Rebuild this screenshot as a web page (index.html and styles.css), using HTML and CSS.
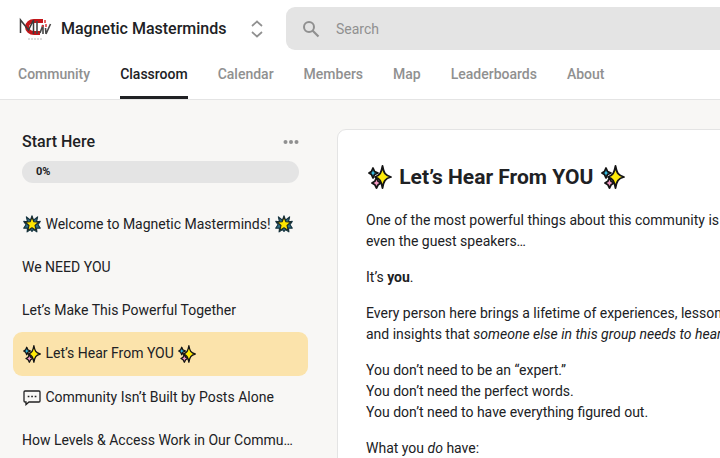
FILE: index.html
```html
<!DOCTYPE html>
<html lang="en">
<head>
<meta charset="utf-8">
<meta name="viewport" content="width=device-width, initial-scale=1">
<title>Magnetic Masterminds</title>
<link rel="stylesheet" href="styles.css">
</head>
<body>
<svg class="sprite" aria-hidden="true">
  <symbol id="sparkles" viewBox="0 0 24 24">
    <g stroke="#151515" stroke-width="1.8" stroke-linejoin="round">
      <path fill="#35bfe6" d="M5 3 6.600 6.600 10 8 6.600 9.400 5 13 3.400 9.400 1 8 3.400 6.600Z"/>
      <path fill="#f29ac3" d="M8.500 12.500 10.200 16.300 13 18 10.200 19.700 8.500 23 6.800 19.700 4 18 6.800 16.300Z"/>
      <path fill="#ffeb0a" d="M14.500 1C15.800 8 17 10.500 23 12 17 13.500 15.800 16 14.500 23 13.200 16 12 13.500 7 12 12 10.500 13.200 8 14.500 1Z"/>
    </g>
  </symbol>
  <symbol id="star" viewBox="0 0 24 24">
    <path fill="#2d6f86" stroke="#173440" stroke-width="1.500" stroke-linejoin="round" d="M12 1 14 7 19.500 2.500 18 9 23 8.500 20 13 23 17.500 18 17.500 18.500 22.500 14 19.500 12 22 10 19.500 5.500 22.500 6 17.500 1 17.500 4 13 1 8.500 6 9 4.500 2.500 10 7Z"/>
    <path fill="#ffe500" stroke="#1b2523" stroke-width="1.400" stroke-linejoin="round" d="M12 3 14.500 9 21 9.500 16 14 17.600 20.500 12 17 6.400 20.500 8 14 3 9.500 9.500 9Z"/>
  </symbol>
</svg>

<header class="header">
  <div class="topbar">
    <div class="brand">
      <svg class="logo" viewBox="0 0 34 26" aria-hidden="true">
        <path d="M25 5H16a7 6 0 0 0 0 12h6" fill="none" stroke="#c4161a" stroke-width="4"/>
        <path d="M2.500 17V4l8 10 5-10v14" fill="none" stroke="#3b3b3b" stroke-width="1.500"/>
        <path d="M19 5v13M22 17l3-8v9M28 18l4.500-10M27.500 12l.5 6" fill="none" stroke="#484848" stroke-width="1.600"/>
        <path d="M27 4v3M24.500 9v2M28 8v3" stroke="#d33" stroke-width="1.500"/>
        <path d="M10 23h14" stroke="#bbb" stroke-width="1" stroke-dasharray="2 1"/>
      </svg>
      <span class="brand-name">Magnetic Masterminds</span>
      <button class="icon-button switcher" type="button" aria-label="Switch community">
        <svg viewBox="0 0 12 18" width="12" height="18"><path d="M1 6 6 1.500 11 6M1 12l5 4.500L11 12" fill="none" stroke="#909090" stroke-width="1.700"/></svg>
      </button>
    </div>
    <label class="search">
      <svg viewBox="0 0 18 18" width="18" height="18" aria-hidden="true"><circle cx="7" cy="7" r="5" fill="none" stroke="#909090" stroke-width="2"/><path d="m10.500 10.500 6 6" stroke="#909090" stroke-width="2.200"/></svg>
      <input type="search" placeholder="Search" aria-label="Search">
    </label>
  </div>
  <nav class="tabs">
    <a href="#">Community</a>
    <a href="#" class="active" aria-current="page">Classroom</a>
    <a href="#">Calendar</a>
    <a href="#">Members</a>
    <a href="#">Map</a>
    <a href="#">Leaderboards</a>
    <a href="#">About</a>
  </nav>
</header>

<main class="layout">
  <aside class="sidebar">
    <div class="course-head">
      <h2>Start Here</h2>
      <button class="icon-button" type="button" aria-label="Course options">
        <svg viewBox="0 0 16 4" width="16" height="4"><g fill="#909090"><circle cx="2.500" cy="2" r="2"/><circle cx="8" cy="2" r="2"/><circle cx="13.500" cy="2" r="2"/></g></svg>
      </button>
    </div>
    <div class="progress">0%</div>
    <nav class="lessons">
      <a href="#"><svg class="emoji"><use href="#star"/></svg> Welcome to Magnetic Masterminds! <svg class="emoji"><use href="#star"/></svg></a>
      <a href="#">We NEED YOU</a>
      <a href="#">Let’s Make This Powerful Together</a>
      <a href="#" class="selected" aria-current="page"><svg class="emoji"><use href="#sparkles"/></svg> Let’s Hear From YOU <svg class="emoji"><use href="#sparkles"/></svg></a>
      <a href="#"><svg class="emoji" viewBox="0 0 18 18"><path d="M2 3h14a1 1 0 0 1 1 1v9a1 1 0 0 1-1 1H6l-3 2.500v-2.500H2a1 1 0 0 1-1-1v-9a1 1 0 0 1 1-1Z" fill="none" stroke="#222" stroke-width="1.300"/><path d="M4.700 8.500h1.700M8.200 8.500h1.700M11.700 8.500h1.700" stroke="#222" stroke-width="1.500"/></svg> Community Isn’t Built by Posts Alone</a>
      <a href="#">How Levels &amp; Access Work in Our Commu…</a>
    </nav>
  </aside>
  <article class="lesson">
    <h1><svg class="emoji"><use href="#sparkles"/></svg> Let’s Hear From YOU <svg class="emoji"><use href="#sparkles"/></svg></h1>
    <p>One of the most powerful things about this community is<br>even the guest speakers…</p>
    <p>It’s <strong>you</strong>.</p>
    <p>Every person here brings a lifetime of experiences, lessons,<br>and insights that <em>someone else in this group needs to hear</em></p>
    <p>You don’t need to be an “expert.”<br>You don’t need the perfect words.<br>You don’t need to have everything figured out.</p>
    <p>What you <em>do</em> have:</p>
  </article>
</main>
</body>
</html>
```
FILE: styles.css
```css
* {
  box-sizing: border-box;
}

body {
  margin: 0;
  overflow-x: hidden;
  background: #f8f7f5;
  color: #202124;
  font: 14px/22px Roboto, "Liberation Sans", sans-serif;
  scrollbar-width: none;
}

a {
  color: inherit;
  text-decoration: none;
}

.sprite {
  display: none;
}

.icon-button {
  display: flex;
  padding: 0;
  border: 0;
  background: none;
}

.header {
  background: #fff;
  border-bottom: 1px solid #e4e4e4;
}

.topbar {
  display: flex;
  gap: 20px;
  padding: 7px 0 0 18px;
}

.brand {
  display: flex;
  flex: 0 0 248px;
  align-items: center;
}

.logo {
  width: 34px;
  height: 26px;
  margin-right: 9px;
}

.brand-name {
  font-size: 16px;
  font-weight: 500;
  white-space: nowrap;
}

.switcher {
  margin-left: auto;
  margin-right: 3px;
}

.search {
  display: flex;
  flex: 1 0 460px;
  align-items: center;
  gap: 16px;
  height: 43px;
  padding: 0 16px;
  border-radius: 9px;
  background: #e4e4e4;
}

.search input {
  flex: 1;
  padding: 0;
  border: 0;
  outline: 0;
  background: none;
  color: inherit;
  font: inherit;
}

.search input::placeholder {
  color: #909090;
}

.tabs {
  display: flex;
  gap: 30px;
  padding: 0 18px;
}

.tabs a {
  padding: 13px 0 11px;
  border-bottom: 3px solid transparent;
  color: #909090;
  font-weight: 500;
}

.tabs .active {
  border-color: #202124;
  color: #202124;
}

.layout {
  display: flex;
  gap: 29px;
  padding: 29px 0 0 13px;
}

.sidebar {
  flex: 0 0 295px;
  min-width: 0;
}

.course-head {
  display: flex;
  align-items: center;
  justify-content: space-between;
  padding: 2px 9px 8px;
}

h2 {
  margin: 0;
  font-size: 16px;
  font-weight: 500;
}

.progress {
  margin: 0 9px 20px;
  padding: 0 14px;
  border-radius: 11px;
  background: #e4e4e4;
  font-size: 11px;
  font-weight: 700;
}

.lessons a {
  display: block;
  overflow: hidden;
  padding: 10px 7px 11px 9px;
  border-radius: 9px;
  text-overflow: ellipsis;
  white-space: nowrap;
}

.lessons .selected {
  background: #fbe3ab;
}

.emoji {
  width: 18px;
  height: 18px;
  margin: 0 1px 2px;
  vertical-align: middle;
}

.lesson {
  flex: 1 0 460px;
  padding: 29px 28px;
  border: 1px solid #e4e4e4;
  border-radius: 9px;
  background: #fff;
  line-height: 21px;
  white-space: nowrap;
}

h1 {
  margin: 0 0 15px;
  font-size: 21px;
  font-weight: 700;
  line-height: 36px;
}

h1 .emoji {
  width: 24px;
  height: 24px;
  margin: 0 2px 2px;
}

p {
  margin: 0 0 15px;
}

p:last-child {
  margin: 0;
}
```
